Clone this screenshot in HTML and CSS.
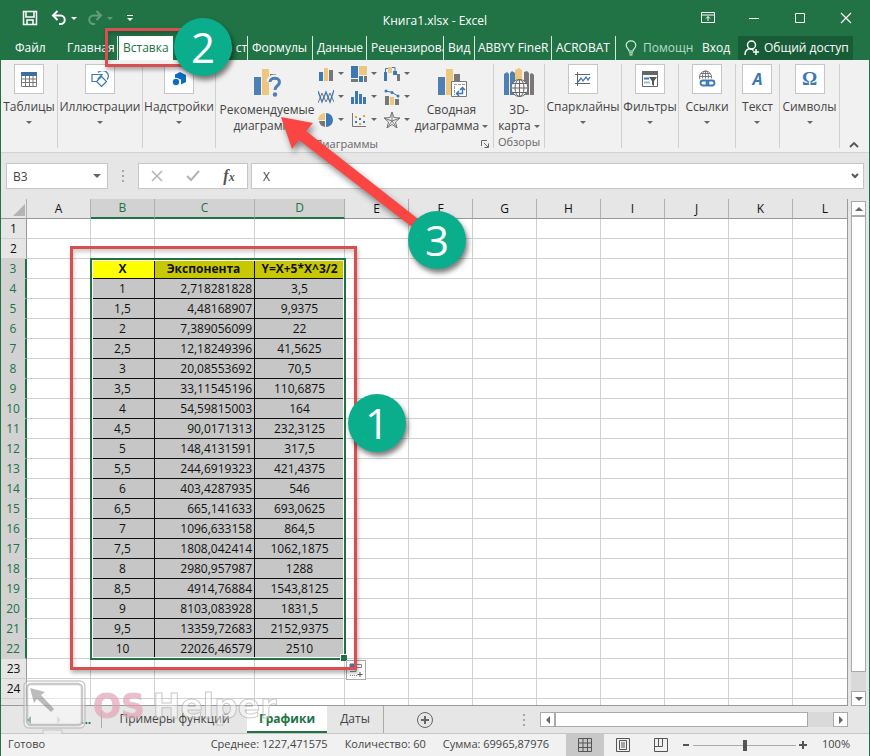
FILE: index.html
```html
<!DOCTYPE html>
<html lang="ru">
<head>
    <meta charset="UTF-8">
    <meta name="viewport" content="width=device-width, initial-scale=1.0">
    <title>Книга1.xlsx - Excel</title>
    <link rel="stylesheet" href="styles.css">
</head>
<body>
    <div class="app">
        <header class="titlebar">
            <div class="quick">
                <button class="q-save" aria-label="Сохранить"><svg width="16" height="16" viewBox="0 0 16 16" fill="none" stroke="#fff" stroke-width="1.5"><path d="M1.5 1.5h13v13h-13zM4 2v5h8V2M5 14v-4h6v4"/></svg></button>
                <button class="q-undo" aria-label="Отменить"><svg width="16" height="16" viewBox="0 0 16 16" fill="none" stroke="#fff" stroke-width="2"><path d="M6.500 1L2 5.500 6.500 10M2 5.500h7.500a4 4 0 0 1 0 8.500H8"/></svg></button>
                <button class="q-caret" aria-label="Список отмены"><i class="caret"></i></button>
                <button class="q-undo dim" aria-label="Вернуть"><svg width="16" height="16" viewBox="0 0 16 16" fill="none" stroke="#fff" stroke-width="2"><path d="M9.500 1L14 5.500 9.500 10M14 5.500H6.500a4 4 0 0 0 0 8.500H8"/></svg></button>
                <button class="q-caret dim" aria-label="Список возврата"><i class="caret"></i></button>
                <button class="q-more" aria-label="Настройка панели"><i class="bar"></i><i class="caret"></i></button>
            </div>
            <div class="doc-name">Книга1.xlsx - Excel</div>
            <div class="win-buttons">
                <button aria-label="Параметры ленты"><svg width="14" height="12" viewBox="0 0 14 12" fill="none" stroke="#fff"><path d="M.5.5h13v10H.5zM1 3h12M7 9V4.500M5 6.500l2-2 2 2"/></svg></button>
                <button aria-label="Свернуть"><svg width="12" height="12" viewBox="0 0 12 12" stroke="#fff"><path d="M1 6.500h10"/></svg></button>
                <button aria-label="Развернуть"><svg width="12" height="12" viewBox="0 0 12 12" fill="none" stroke="#fff"><path d="M1.500 1.500h9v9h-9z"/></svg></button>
                <button aria-label="Закрыть"><svg width="12" height="12" viewBox="0 0 12 12" stroke="#fff" stroke-width="1.200"><path d="M1 1l10 10M11 1L1 11"/></svg></button>
            </div>
        </header>

        <nav class="tabs">
            <a href="#" class="tab tab-file">Файл</a>
            <a href="#" class="tab tab-home">Главная</a>
            <a href="#" class="tab tab-insert active">Вставка</a>
            <a href="#" class="tab tab-page">Разметка стр</a>
            <a href="#" class="tab tab-formulas">Формулы</a>
            <a href="#" class="tab tab-data">Данные</a>
            <a href="#" class="tab tab-review">Рецензирова</a>
            <a href="#" class="tab tab-view">Вид</a>
            <a href="#" class="tab tab-abbyy">ABBYY FineR</a>
            <a href="#" class="tab tab-acrobat">ACROBAT</a>
            <a href="#" class="tab help"><svg width="12" height="16" viewBox="0 0 12 16" fill="none" stroke="#d5ecdd" stroke-width="1.200"><path d="M4 11c0-2-2.800-3-2.800-5.800a4.800 4.400 0 0 1 9.600 0C10.800 8 8 9 8 11zM4 12.800h4M4.500 14.800h3"/></svg>Помощн</a>
            <a href="#" class="tab login">Вход</a>
            <button class="share"><svg width="16" height="16" viewBox="0 0 16 16" fill="none" stroke="#fff" stroke-width="1.500"><circle cx="7.500" cy="5" r="4"/><path d="M1 15c0-4 2-6 5-6.200M5.500 8.800c2 0 3 .4 4 1.600M12 9v6M9 12h6"/></svg>Общий доступ</button>
        </nav>

        <section class="ribbon">
            <div class="group g-tables">
                <button class="tool"><span class="tile"><svg width="16" height="16" viewBox="0 0 16 16" fill="none" stroke="#777"><path d="M.5 1.500h15v14H.5z" fill="#fff"/><path d="M.5 1.500h15v3H.5z" fill="#3c6ea5" stroke="#3c6ea5"/><path d="M.5 8h15M.5 11.500h15M4.500 4.500v11M8.500 4.500v11M12 4.500v11"/></svg></span>Таблицы<i class="caret"></i></button>
            </div>
            <div class="group g-pics">
                <button class="tool"><span class="tile"><svg width="18" height="16" viewBox="0 0 18 16" fill="none" stroke="#3c78b4" stroke-width="1.200"><path d="M7 1.500a5.500 5 0 0 1 9 7M1 3.500h10l-4 4.500 2 2.500H1z" fill="#fff"/><path d="M10.500 5.500l5 5-5 5-5-5z" fill="#fff"/></svg></span>Иллюстрации<i class="caret"></i></button>
            </div>
            <div class="group g-addins">
                <button class="tool"><span class="tile"><svg width="16" height="16" viewBox="0 0 16 16" fill="#0f6cbd"><path d="M9 1l6 3v7l-5 2.500V8.500L4 7V3.500z"/><circle cx="5" cy="11" r="3.800" stroke="#fff"/></svg></span>Надстройки<i class="caret"></i></button>
            </div>

            <div class="group g-charts">
                <div class="charts-body">
                    <button class="big recommend">
                        <svg width="30" height="30" viewBox="0 0 30 30"><path fill="#4e80b5" d="M2 9h7v18H2z"/><path fill="#edc77e" d="M10 1h7v26h-7z"/><path fill="#7b7678" d="M18 6h6v4h-6z"/><path d="M17.500 14c0-6 10-6 10 0 0 4-4.500 3.500-4.500 8" fill="none" stroke="#f1f1f1" stroke-width="6"/><path d="M18 14c0-5 9.500-5 9.500 0 0 4-4.500 3.500-4.500 8" fill="none" stroke="#4e80b5" stroke-width="3"/><circle cx="23" cy="26.500" r="2.200" fill="#4e80b5"/></svg>
                        <span>Рекомендуемые<br>диаграммы</span>
                    </button>
                    <div class="chart-kinds">
                        <button aria-label="Гистограмма"><svg width="16" height="16" viewBox="0 0 16 16"><path fill="#3c78b4" d="M1 6h4v9H1z"/><path fill="#edc77e" d="M6 2h4v13H6z"/><path fill="#777" d="M11 4h4v11h-4z"/></svg><i class="caret"></i></button>
                        <button aria-label="Иерархическая"><svg width="16" height="16" viewBox="0 0 16 16"><path fill="#3c78b4" d="M0 0h7v12H0z"/><path fill="#edc77e" d="M8 0h8v9H8z"/><path fill="#777" d="M0 13h7v3H0z"/><path fill="#3c78b4" d="M8 10h4v6H8z"/><path fill="#777" d="M13 10h3v6h-3z"/></svg><i class="caret"></i></button>
                        <button aria-label="Каскадная"><svg width="16" height="16" viewBox="0 0 16 16"><path fill="#3c78b4" d="M0 6h3v9H0zM9 5h4v4H9z"/><path fill="#edc77e" d="M4 1h4v6H4z"/><path fill="#777" d="M13 8h3v7h-3z"/><path d="M1.500 6V2.500H4M8 1.500h3V5" fill="none" stroke="#3c78b4"/></svg><i class="caret"></i></button>
                        <button aria-label="График"><svg width="16" height="16" viewBox="0 0 16 16" fill="none"><path stroke="#777" d="M0 14L4 4l4 9 4-9 4 9"/><path stroke="#3c78b4" stroke-width="1.300" d="M0 2l4 11 4-10 4 10 4-12"/></svg><i class="caret"></i></button>
                        <button aria-label="Статистическая"><svg width="16" height="16" viewBox="0 0 16 16" fill="#3c78b4"><path d="M0 8h3v7H0zM4 2h3v13H4zM8 5h3v10H8zM12 8h3v7h-3z"/></svg><i class="caret"></i></button>
                        <button aria-label="Комбинированная"><svg width="16" height="16" viewBox="0 0 16 16"><path fill="#777" d="M1 7h4v9H1zM11 10h4v6h-4z"/><path fill="#edc77e" d="M6 8h4v8H6z"/><path d="M1 2l6 1 7 4" fill="none" stroke="#3c78b4"/><g fill="#3c78b4"><circle cx="2" cy="2" r="1.500"/><circle cx="8" cy="3.500" r="1.500"/><circle cx="14" cy="7" r="1.500"/></g></svg><i class="caret"></i></button>
                        <button aria-label="Круговая"><svg width="16" height="16" viewBox="0 0 16 16"><path fill="#edc77e" d="M7 8H0a7 7 0 0 1 7-7z"/><path fill="#3c78b4" d="M8 1a7 7 0 0 1 0 14V8z"/><path fill="#777" d="M7 9v6a7 7 0 0 1-6-6z"/></svg><i class="caret"></i></button>
                        <button aria-label="Точечная"><svg width="16" height="16" viewBox="0 0 16 16"><path d="M1.500 1v13.500H15" fill="none" stroke="#777"/><path fill="#3c78b4" d="M4 9h2v2H4zM8 6h2v2H8zM12 9h2v2h-2z"/><path fill="#d5a548" d="M4 4h2v2H4zM8 11h2v2H8zM12 3h2v2h-2z"/></svg><i class="caret"></i></button>
                        <button aria-label="Лепестковая"><svg width="16" height="16" viewBox="0 0 16 16" fill="none" stroke="#777"><path d="M8 0l2 5.500 6 .5-4.500 4L13 16l-5-3.500L3 16l1.500-6L0 6l6-.5zM8 0v9M16 6L8 9l5 7M0 6l8 3-5 7"/></svg><i class="caret"></i></button>
                    </div>
                    <button class="big pivot">
                        <svg width="32" height="30" viewBox="0 0 32 30"><path fill="#4e80b5" d="M2 9h7v18H2z"/><path fill="#edc77e" d="M10 1h7v26h-7z"/><path fill="#7b7678" d="M18 6h6v8h-6z"/><path fill="#fff" stroke="#777" d="M15.500 13.500h15v15h-15z"/><path fill="none" stroke="#999" stroke-dasharray="3 1" d="M18 16.500h11M18.500 18v9"/><path fill="none" stroke="#3c78b4" stroke-width="1.500" d="M21 25.500h5.500V20M23 23l-2.500 2.500L23 28M24 22l2.500-2.500L29 22"/></svg>
                        <span>Сводная<br>диаграмма <i class="caret"></i></span>
                    </button>
                </div>
                <div class="group-name">Диаграммы</div>
                <button class="launcher" aria-label="Параметры диаграмм"><svg width="8" height="8" viewBox="0 0 8 8" fill="none" stroke="#666"><path d="M.5 6V.5H6M3 3l4 4M7.500 3.500v4h-4"/></svg></button>
            </div>

            <div class="group g-map">
                <button class="big">
                    <svg width="30" height="30" viewBox="0 0 30 30"><path fill="#4e80b5" d="M0 6l3-2 2 2v21H0zM6 5l2-2 3 2v22H6z"/><path fill="#edc77e" d="M11 2l4-2 3 2v25h-7z"/><path fill="#7b7678" d="M20 4l3-1 2 2v22h-5zM26 6l2-1 2 2v20h-4z"/><circle cx="15.500" cy="20" r="8.500" fill="#f8f8f8" stroke="#666"/><path fill="none" stroke="#666" d="M15.500 11.500v17M7 20h17M9 15.500h13M9 24.500h13"/><ellipse cx="15.500" cy="20" rx="4.500" ry="8.500" fill="none" stroke="#666"/></svg>
                    <span>3D-<br>карта <i class="caret"></i></span>
                </button>
                <div class="group-name">Обзоры</div>
            </div>

            <div class="group g-spark">
                <button class="tool"><span class="tile"><svg width="18" height="16" viewBox="0 0 18 16" fill="none"><path stroke="#666" d="M3.500 1v14M1 3.500h15M1 12.500h15"/><path stroke="#3c78b4" stroke-width="1.300" d="M4 11l3-4 2 3 3-4 2 3 2-3"/></svg></span>Спарклайны<i class="caret"></i></button>
            </div>
            <div class="group g-filter">
                <button class="tool"><span class="tile"><svg width="16" height="16" viewBox="0 0 16 16"><path fill="#fff" stroke="#666" d="M.5.5h15v15H.5z"/><path fill="#666" d="M0 0h16v4H0z"/><path stroke="#3c78b4" stroke-width="2" d="M2 7.500h5"/><path stroke="#9cb8d4" stroke-width="2" d="M2 11.500h6"/><path fill="#555" d="M7 6h8l-3 4v5l-2-1.500V10z"/></svg></span>Фильтры<i class="caret"></i></button>
            </div>
            <div class="group g-links">
                <button class="tool"><span class="tile"><svg width="18" height="18" viewBox="0 0 18 18" fill="none"><g stroke="#777"><path d="M2 9.500a6 6 0 1 1 11 0M1.500 6.500h12M3 3.500h9M7.500 1v9"/><ellipse cx="7.500" cy="6.500" rx="3" ry="5.500"/></g><g stroke="#fff" stroke-width="4"><rect x="2.500" y="10.500" width="8" height="5" rx="2.500"/><rect x="8.500" y="10.500" width="8" height="5" rx="2.500"/></g><g stroke="#3c78b4" stroke-width="1.800"><rect x="2.500" y="10.500" width="8" height="5" rx="2.500"/><rect x="8.500" y="10.500" width="8" height="5" rx="2.500"/></g></svg></span>Ссылки<i class="caret"></i></button>
            </div>
            <div class="group g-text">
                <button class="tool"><span class="tile letter-a">A</span>Текст<i class="caret"></i></button>
            </div>
            <div class="group g-symbols">
                <button class="tool"><span class="tile letter-o">Ω</span>Символы<i class="caret"></i></button>
            </div>
            <div class="ribbon-end">
                <button aria-label="Свернуть ленту"><svg width="10" height="6" viewBox="0 0 10 6" fill="none" stroke="#555" stroke-width="1.800"><path d="M1 5l4-4 4 4"/></svg></button>
            </div>
        </section>

        <section class="formula-bar">
            <div class="name-box">
                <input type="text" value="B3" aria-label="Имя ячейки">
                <i class="caret"></i>
            </div>
            <i class="dots"></i>
            <div class="fx-buttons">
                <button aria-label="Отмена"><svg width="12" height="12" viewBox="0 0 12 12" stroke="#b4b4b4" stroke-width="1.500"><path d="M1 1l10 10M11 1L1 11"/></svg></button>
                <button aria-label="Ввод"><svg width="14" height="12" viewBox="0 0 14 12" fill="none" stroke="#b4b4b4" stroke-width="2"><path d="M1 6l4 4 8-9"/></svg></button>
                <button class="fx" aria-label="Вставить функцию">f<small>x</small></button>
            </div>
            <div class="formula">
                <input type="text" value="X" aria-label="Строка формул">
                <svg width="8" height="6" viewBox="0 0 8 6" fill="none" stroke="#555" stroke-width="2"><path d="M1 1l3 3 3-3"/></svg>
            </div>
        </section>

        <main class="sheet-area">
            <div class="sheet">
                <table class="grid">
                    <colgroup>
                        <col class="w-head"><col class="w-std"><col class="w-std"><col class="w-c"><col class="w-d">
                        <col class="w-std"><col class="w-std"><col class="w-std"><col class="w-std"><col class="w-std"><col class="w-std"><col class="w-std"><col>
                    </colgroup>
                    <thead>
                        <tr>
                            <th class="corner" aria-label="Выделить всё"><svg width="12" height="12" viewBox="0 0 12 12"><path fill="#b4b4b4" d="M12 0v12H0z"/></svg></th>
                            <th>A</th><th class="sel">B</th><th class="sel">C</th><th class="sel">D</th><th>E</th><th>F</th><th>G</th><th>H</th><th>I</th><th>J</th><th>K</th><th class="last">L</th>
                        </tr>
                    </thead>
                    <tbody id="rows"></tbody>
                </table>
                <div class="selection"></div>
                <button class="analysis" aria-label="Быстрый анализ"><svg width="16" height="16" viewBox="0 0 16 16" fill="none" stroke="#888"><path fill="#4a72b0" stroke="#4a72b0" d="M2 2h5v4H2z"/><path d="M8 2.500h5.500v3H8M2 9.500h6v-2"/><path stroke-dasharray="1 1" d="M2 13.500h7"/><path stroke="#555" d="M9.500 12.500h5M12 10v5"/></svg></button>
            </div>
            <div class="vscroll">
                <button aria-label="Вверх"><i class="arrow up"></i></button>
                <div class="track"><div class="thumb"></div></div>
                <button aria-label="Вниз"><i class="arrow down"></i></button>
            </div>
        </main>

        <nav class="sheets">
            <button class="sheet-nav" aria-label="Предыдущий лист"><i class="arrow left green"></i></button>
            <button class="sheet-nav" aria-label="Следующий лист"><i class="arrow right pale"></i></button>
            <span class="sheet-dots">...</span>
            <a href="#" class="sheet-tab examples">Примеры функций</a>
            <a href="#" class="sheet-tab current">Графики</a>
            <a href="#" class="sheet-tab dates">Даты</a>
            <button class="add-sheet" aria-label="Новый лист"><svg width="16" height="16" viewBox="0 0 16 16" fill="none" stroke="#666"><circle cx="8" cy="8" r="7.500"/><path stroke-width="2" d="M4 8h8M8 4v8"/></svg></button>
            <i class="dots"></i>
            <div class="hscroll">
                <button aria-label="Влево"><i class="arrow left"></i></button>
                <div class="track"><div class="thumb"></div></div>
                <button aria-label="Вправо"><i class="arrow right"></i></button>
            </div>
        </nav>

        <footer class="status">
            <span class="ready">Готово</span>
            <span>Среднее: 1227,471575</span>
            <span>Количество: 60</span>
            <span>Сумма: 69965,87976</span>
            <div class="views">
                <button class="on" aria-label="Обычный"><svg width="14" height="14" viewBox="0 0 14 14" fill="none" stroke="#555"><path d="M.5.500h13v13H.5zM5 .5v13M9.500.5v13M.5 5h13M.5 9.500h13"/></svg></button>
                <button aria-label="Разметка страницы"><svg width="14" height="14" viewBox="0 0 14 14" fill="none" stroke="#555"><path d="M.5.500h13v13H.5zM3.500 2.500h7v9h-7zM5 5h4M5 7h4M5 9h4"/></svg></button>
                <button aria-label="Страничный"><svg width="14" height="14" viewBox="0 0 14 14" fill="none" stroke="#555"><path d="M.5.500h13v13H.5zM.5 8.500h8v-8M4.500.5v8"/></svg></button>
            </div>
            <button class="zoom-btn" aria-label="Уменьшить"><svg width="8" height="8" viewBox="0 0 8 8" stroke="#555" stroke-width="2"><path d="M1 4h6"/></svg></button>
            <input class="zoom" type="range" min="0" max="100" value="50" aria-label="Масштаб">
            <button class="zoom-btn" aria-label="Увеличить"><svg width="8" height="8" viewBox="0 0 8 8" stroke="#555" stroke-width="2"><path d="M0 4h8M4 0v8"/></svg></button>
            <span class="percent">100%</span>
        </footer>

        <!-- step marks over the window -->
        <div class="frame frame-data"></div>
        <div class="frame frame-tab"></div>
        <svg class="pointer" width="160" height="130" viewBox="0 0 160 130"><path fill="#fb4543" d="M3 3L35 9l-7 8L144 108l-6 8L21 26l-7 9z"/></svg>
        <div class="step step-1">1</div>
        <div class="step step-2">2</div>
        <div class="step step-3">3</div>

        <div class="watermark">
            <svg width="66" height="56" viewBox="0 0 66 56" fill="none"><rect x="2" y="2" width="61" height="47" rx="5" fill="#fff" fill-opacity=".7" stroke="#b8b8b8" stroke-width="1.500"/><rect x="5" y="5" width="55" height="41" rx="4" stroke="#b5b5b5" stroke-width="2.500"/><path fill="#a0a0a0" d="M8 9l15 4-4 3 13 14-3 3-14-13-3 4z"/><path fill="#eee" stroke="#b8b8b8" d="M21 55v-4h19v4"/></svg>
            <span class="wm-os">OS</span><span class="wm-helper">Helper</span>
        </div>
    </div>

    <script src="script.js"></script>
</body>
</html>
```

FILE: styles.css
```css
* {
    box-sizing: border-box;
}

body {
    margin: 0;
    font-family: "Open Sans", "Noto Sans", sans-serif;
    font-size: 12px;
    color: #444;
}

button, input {
    font: inherit;
    color: inherit;
    border: 0;
    padding: 0;
    margin: 0;
    background: none;
}

a {
    color: inherit;
    text-decoration: none;
}

svg {
    display: block;
    flex: none;
}

.app {
    position: relative;
    display: flex;
    flex-direction: column;
    min-height: 100vh;
    overflow: hidden;
    background: #e6e6e6;
    border: 1px solid #217346;
    border-top: 0;
}

.caret {
    display: inline-block;
    border: 3px solid transparent;
    border-top-color: #666;
    border-bottom: 0;
    vertical-align: middle;
}

.arrow {
    display: block;
    border: 4px solid transparent;
}

.up { border-top: 0; border-bottom-color: #666; }
.down { border-bottom: 0; border-top-color: #666; }
.left { border-left: 0; border-right-color: #666; }
.right { border-right: 0; border-left-color: #666; }
.left.green { border-right-color: #217346; }
.right.pale { border-left-color: #bbb; }

.dots {
    width: 2px;
    height: 12px;
    background: repeating-linear-gradient(#a6a6a6 0 2px, transparent 2px 5px);
}

/* title bar */
.titlebar {
    display: grid;
    grid-template-columns: 1fr auto 1fr;
    align-items: center;
    height: 36px;
    background: #217346;
    color: #fff;
}

.quick {
    display: flex;
    align-items: center;
    height: 32px;
    padding-left: 17px;
}

.quick button {
    display: flex;
    flex-direction: column;
    align-items: center;
    justify-content: center;
    gap: 2px;
    height: 24px;
}

.quick .caret { border-top-color: #fff; }
.q-save { width: 24px; }
.q-undo { width: 22px; margin-left: 6px; }
.q-caret { width: 8px; }
.q-more { width: 8px; margin-left: 12px; }
.q-more .bar { width: 6px; height: 1px; background: #fff; }
.quick .dim { opacity: 0.3; }

.doc-name {
    padding-top: 4px;
}

.win-buttons {
    display: flex;
    justify-content: flex-end;
}

.win-buttons button {
    display: flex;
    justify-content: center;
    width: 46px;
}

/* tabs */
.tabs {
    display: flex;
    height: 24px;
    padding-right: 16px;
    background: #217346;
    color: #fff;
    line-height: 24px;
}

.tab {
    flex: none;
    padding-left: 4px;
    overflow: hidden;
    white-space: nowrap;
    border-right: 1px solid #d5ecdd;
}

.tab-file { width: 61px; padding-left: 14px; border-right: 0; }
.tab-home { width: 56px; padding-left: 5px; }
.tab-insert { width: 54px; margin-left: 1px; }
.tab-page { width: 75px; padding-left: 6px; }
.tab-formulas { width: 65px; }
.tab-data { width: 54px; }
.tab-review { width: 77px; }
.tab-view { width: 31px; }
.tab-abbyy { width: 77px; padding-left: 3px; }
.tab-acrobat { width: 64px; }

.tab.active {
    background: #fff;
    color: #217346;
    border-right: 0;
}

.tab.help {
    display: flex;
    align-items: center;
    gap: 6px;
    width: 78px;
    padding-left: 9px;
    border: 0;
    color: #b9dcc6;
}

.tab.login {
    flex: 1;
    padding-left: 8px;
    border: 0;
}

.share {
    display: flex;
    align-items: center;
    gap: 4px;
    width: 115px;
    padding-left: 6px;
    background: #185c37;
    white-space: nowrap;
}

/* ribbon */
.ribbon {
    display: flex;
    height: 93px;
    padding: 4px 0;
    background: #f1f1f1;
    border-bottom: 1px solid #d2d2d2;
}

.group {
    position: relative;
    display: flex;
    flex-direction: column;
    align-items: center;
    flex: none;
    border-right: 1px solid #d0d0d0;
}

.g-tables { width: 57px; }
.g-pics { width: 85px; }
.g-addins { width: 73px; }
.g-charts { width: 278px; }
.g-map { width: 51px; }
.g-spark { width: 77px; }
.g-filter { width: 57px; }
.g-links { width: 57px; }
.g-text { width: 44px; }
.g-symbols { width: 60px; }

.tool {
    display: flex;
    flex-direction: column;
    align-items: center;
    line-height: 16px;
    white-space: nowrap;
}

.tool .caret {
    margin-top: 6px;
}

.tile {
    display: flex;
    align-items: center;
    justify-content: center;
    width: 30px;
    height: 30px;
    margin-bottom: 5px;
    background: #fff;
    border: 1px solid #c6c6c6;
}

.letter-a {
    font-size: 16px;
    font-weight: bold;
    font-style: italic;
    color: #3c78b4;
}

.letter-o {
    font-family: "Liberation Serif", serif;
    font-size: 19px;
    font-weight: bold;
    color: #3c78b4;
}

.charts-body {
    display: flex;
    align-items: flex-start;
    width: 100%;
}

.big {
    display: flex;
    flex-direction: column;
    align-items: center;
    gap: 4px;
    height: 72px;
    padding-top: 4px;
    line-height: 16px;
    white-space: nowrap;
}

.recommend { width: 102px; }
.pivot { width: 69px; }

.chart-kinds {
    display: grid;
    grid-template-columns: repeat(3, 33px);
    grid-auto-rows: 23px;
    width: 99px;
}

.chart-kinds button {
    display: flex;
    align-items: center;
    gap: 4px;
    padding-bottom: 4px;
}

.group-name {
    font-size: 11px;
    line-height: 16px;
    color: #666;
}

.g-charts .group-name {
    padding-right: 16px;
}

.launcher {
    position: absolute;
    right: 4px;
    bottom: 0;
}

.ribbon-end {
    display: flex;
    flex: 1;
    align-items: flex-end;
    justify-content: flex-end;
    padding-right: 10px;
}

/* formula bar */
.formula-bar {
    display: flex;
    align-items: center;
    height: 46px;
    padding: 0 5px;
}

.name-box, .fx-buttons, .formula {
    display: flex;
    align-items: center;
    height: 26px;
    background: #fff;
    border: 1px solid #c6c6c6;
}

.name-box {
    width: 102px;
    margin-right: 14px;
    padding: 0 6px;
}

.name-box input {
    width: 100%;
}

.name-box .caret {
    border-width: 4px 4px 0;
}

.fx-buttons {
    width: 110px;
    margin: 0 3px 0 14px;
}

.fx-buttons button {
    display: flex;
    flex: 1;
    align-items: baseline;
    justify-content: center;
}

.fx {
    font: italic bold 16px "Liberation Serif", serif;
    color: #555;
}

.fx small {
    font-size: 12px;
}

.formula {
    flex: 1;
    padding: 0 4px 0 11px;
}

.formula input {
    flex: 1;
}

/* sheet */
.sheet-area {
    display: flex;
    flex: 1;
    min-height: 0;
}

.sheet {
    position: relative;
    flex: 1;
    height: 507px;
    overflow: hidden;
    border-right: 1px solid #999;
    border-bottom: 1px solid #999;
}

.grid {
    width: 100%;
    min-width: 856px;
    table-layout: fixed;
    border-collapse: separate;
    border-spacing: 0;
    background: #fff;
    color: #111;
    line-height: 19px;
}

.w-head { width: 26px; }
.w-std { width: 64px; }
.w-c { width: 100px; }
.w-d { width: 90px; }

.grid th, .grid td {
    height: 20px;
    padding: 0;
    overflow: hidden;
    text-align: center;
    white-space: nowrap;
    border-right: 1px solid #d0d0d0;
    border-bottom: 1px solid #d0d0d0;
}

.grid th {
    background: #e6e6e6;
    font-weight: normal;
}

.grid thead th {
    border-right-color: #b0b0b0;
    border-bottom-color: #999;
}

.grid tbody th {
    border-right-color: #999;
}

.grid .last {
    border-right: 0;
}

.grid thead .sel {
    background: #d2d2d2;
    color: #217346;
    line-height: 18px;
    border-bottom: 2px solid #217346;
}

.grid tbody .sel {
    background: #d2d2d2;
    color: #217346;
    border-right: 2px solid #217346;
}

.corner svg {
    margin: 3px 1px 0 auto;
}

.grid td.data {
    background: #c6c6c6;
    border-color: #111;
}

.grid td.right {
    padding-right: 2px;
    text-align: right;
}

.grid td.title {
    background: #c8c800;
    font-weight: bold;
    text-align: center;
}

.grid td.title.first {
    background: #ff0;
}

/* border of the selected range B3:D22 */
.selection {
    position: absolute;
    left: 89px;
    top: 59px;
    width: 256px;
    height: 402px;
    border: 2px solid #217346;
    box-shadow: inset 0 0 0 1px #fff;
}

.selection::after {
    content: "";
    position: absolute;
    right: -3px;
    bottom: -3px;
    width: 6px;
    height: 6px;
    background: #217346;
    border: 1px solid #fff;
    border-width: 1px 0 0 1px;
}

.analysis {
    position: absolute;
    left: 345px;
    top: 461px;
    display: flex;
    align-items: center;
    justify-content: center;
    width: 20px;
    height: 20px;
    background: #fff;
    border: 1px solid #aaa;
}

.vscroll {
    display: flex;
    flex-direction: column;
    width: 15px;
    margin: 2px 3px 0;
}

.vscroll button, .hscroll button {
    display: flex;
    align-items: center;
    justify-content: center;
    width: 15px;
    height: 15px;
    background: #fff;
    border: 1px solid #aaa;
}

.track {
    flex: 1;
    background: #d9d9d9;
}

.thumb {
    background: #fff;
    border: 1px solid #aaa;
}

.vscroll .thumb {
    height: 96%;
}

/* sheet tabs */
.sheets {
    display: flex;
    align-items: center;
    height: 27px;
    padding-right: 21px;
}

.sheet-nav {
    display: flex;
    justify-content: flex-end;
    width: 30px;
}

.sheet-dots {
    width: 41px;
    padding-left: 20px;
    font-weight: bold;
    color: #217346;
    border-right: 1px solid #aaa;
}

.sheet-tab {
    align-self: stretch;
    line-height: 26px;
    text-align: center;
    white-space: nowrap;
}

.examples { width: 145px; }

.current {
    width: 80px;
    background: #fff;
    color: #217346;
    font-weight: bold;
    border-bottom: 2px solid #217346;
}

.dates {
    width: 57px;
    border-right: 1px solid #aaa;
}

.add-sheet {
    margin: 0 auto 0 33px;
}

.hscroll {
    display: flex;
    flex: 0 1 308px;
    margin-left: 15px;
}

.hscroll .track {
    display: flex;
}

.hscroll .thumb {
    width: 91%;
}

/* status bar */
.status {
    display: flex;
    align-items: center;
    height: 23px;
    padding-right: 19px;
    background: #f1f1f1;
    border-top: 1px solid #c6c6c6;
    font-size: 11px;
    line-height: 18px;
    white-space: nowrap;
}

.status > span {
    margin-right: 17px;
    padding-bottom: 3px;
}

.status .ready {
    flex: 1;
    padding-left: 7px;
}

.views {
    display: flex;
    align-self: stretch;
}

.views button {
    display: flex;
    align-items: center;
    justify-content: center;
    width: 38px;
}

.views .on {
    background: #c8c8c8;
}

.zoom-btn {
    padding: 2px;
}

.zoom {
    width: 103px;
    height: 12px;
    margin: 0 1px;
    appearance: none;
    background: linear-gradient(#aaa, #aaa) center / 100% 1px no-repeat;
}

.zoom::-webkit-slider-thumb {
    appearance: none;
    width: 4px;
    height: 11px;
    background: #555;
}

.status .percent {
    margin: 0 0 0 13px;
}

/* step marks */
.frame {
    position: absolute;
    border: 3px solid #d94f50;
    box-shadow: 1px 3px 4px rgba(0, 0, 0, 0.3), inset 1px 3px 4px rgba(0, 0, 0, 0.2);
}

.frame-data {
    left: 69px;
    top: 246px;
    width: 287px;
    height: 424px;
}

.frame-tab {
    left: 104px;
    top: 28px;
    width: 90px;
    height: 39px;
}

.pointer {
    position: absolute;
    left: 277px;
    top: 114px;
    filter: drop-shadow(2px 4px 3px rgba(0, 0, 0, 0.45));
}

.step {
    position: absolute;
    width: 58px;
    height: 58px;
    border-radius: 50%;
    background: #0bae8c;
    color: #fff;
    font-size: 42px;
    line-height: 58px;
    text-align: center;
    box-shadow: 2px 4px 5px rgba(0, 0, 0, 0.5);
}

.step-1 { left: 347px; top: 394px; }
.step-2 { left: 173px; top: 18px; }
.step-3 { left: 407px; top: 211px; }

.watermark {
    position: absolute;
    left: 21px;
    top: 679px;
    display: flex;
    align-items: center;
    font-family: "DejaVu Sans", sans-serif;
    font-size: 33px;
    font-weight: bold;
    line-height: 50px;
    opacity: 0.7;
    pointer-events: none;
}

.wm-os {
    margin: 0 8px 0 5px;
    color: #e8a0b4;
    -webkit-text-stroke: 1px #c9b5bb;
}

.wm-helper {
    color: rgba(255, 255, 255, 0.6);
    -webkit-text-stroke: 1px #b4b4b4;
}
```

FILE: script.js
```js
// B3:D22 of the sheet
var data = [
    ['X', 'Экспонента', 'Y=X+5*X^3/2'],
    ['1', '2,718281828', '3,5'],
    ['1,5', '4,48168907', '9,9375'],
    ['2', '7,389056099', '22'],
    ['2,5', '12,18249396', '41,5625'],
    ['3', '20,08553692', '70,5'],
    ['3,5', '33,11545196', '110,6875'],
    ['4', '54,59815003', '164'],
    ['4,5', '90,0171313', '232,3125'],
    ['5', '148,4131591', '317,5'],
    ['5,5', '244,6919323', '421,4375'],
    ['6', '403,4287935', '546'],
    ['6,5', '665,141633', '693,0625'],
    ['7', '1096,633158', '864,5'],
    ['7,5', '1808,042414', '1062,1875'],
    ['8', '2980,957987', '1288'],
    ['8,5', '4914,76884', '1543,8125'],
    ['9', '8103,083928', '1831,5'],
    ['9,5', '13359,72683', '2152,9375'],
    ['10', '22026,46579', '2510']
];

var rows = document.getElementById('rows');
for (var r = 1; r <= 25; r++) {
    var tr = document.createElement('tr');
    var values = data[r - 3];
    var head = document.createElement('th');
    // the last row is only a strip above the sheet tabs
    head.textContent = r < 25 ? r : '';
    if (values) {
        head.className = 'sel';
    }
    tr.appendChild(head);
    for (var c = 0; c < 12; c++) {
        var td = document.createElement('td');
        if (values && c >= 1 && c <= 3) {
            td.textContent = values[c - 1];
            td.className = 'data';
            if (c === 2) {
                td.className += ' right';
            }
            if (r === 3) {
                td.className += ' title';
                if (c === 1) {
                    td.className += ' first';
                }
            }
        }
        if (c === 11) {
            td.className = 'last';
        }
        tr.appendChild(td);
    }
    rows.appendChild(tr);
}
```
